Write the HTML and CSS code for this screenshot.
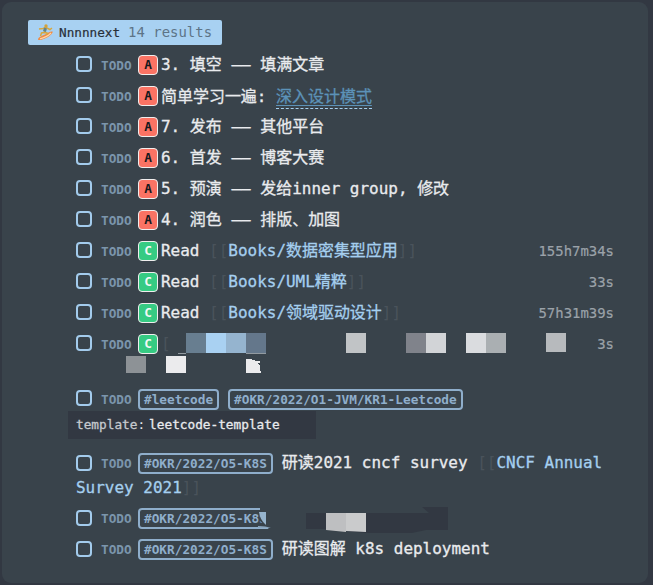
FILE: index.html
```
<!DOCTYPE html>
<html lang="zh-CN">
<head>
<meta charset="utf-8">
<title>Nnnnnext</title>
<link rel="stylesheet" href="styles.css">
</head>
<body>
<main class="panel">
  <header class="query">
    <svg class="surfer" width="17" height="17" viewBox="0 0 17 17"><path d="M1 15.500C1 13 5 12 8 10.500S13 7 15.500 7.500C16.500 8 14 11.500 10 13.500S1.500 17 1 15.500Z" fill="#ef8b45"/><path d="M3 14.800C7 14 11 12 14 9" fill="none" stroke="#ffd5a5" stroke-width="1.200"/><path d="M2 5L6 4.500L9 3.500L13 5.500L15 4M8.500 5L7 8.500L4.500 9L3.500 12M7 8.500L10 9L10.500 11" fill="none" stroke="#d9a83d" stroke-width="1.500"/><path d="M8.500 4L7.500 7.500" stroke="#65858a" stroke-width="3"/><circle cx="9" cy="2" r="1.700" fill="#d2a23c"/></svg>
    <span class="name">Nnnnnext</span><span class="count">14 results</span>
  </header>
  <ul class="tasks">
    <li><div class="line"><i class="check"></i><b class="todo">TODO</b><b class="prio a">A</b><span class="text">3. 填空 —— 填满文章</span></div></li>
    <li><div class="line"><i class="check"></i><b class="todo">TODO</b><b class="prio a">A</b><span class="text linked">简单学习一遍: <a class="ext">深入设计模式</a></span></div></li>
    <li><div class="line"><i class="check"></i><b class="todo">TODO</b><b class="prio a">A</b><span class="text">7. 发布 —— 其他平台</span></div></li>
    <li><div class="line"><i class="check"></i><b class="todo">TODO</b><b class="prio a">A</b><span class="text">6. 首发 —— 博客大赛</span></div></li>
    <li><div class="line"><i class="check"></i><b class="todo">TODO</b><b class="prio a">A</b><span class="text">5. 预演 —— 发给inner group, 修改</span></div></li>
    <li><div class="line"><i class="check"></i><b class="todo">TODO</b><b class="prio a">A</b><span class="text">4. 润色 —— 排版、加图</span></div></li>
    <li><div class="line"><i class="check"></i><b class="todo">TODO</b><b class="prio c">C</b><span class="text">Read <s>[[</s><a>Books/数据密集型应用</a><s>]]</s></span><span class="time">155h7m34s</span></div></li>
    <li><div class="line"><i class="check"></i><b class="todo">TODO</b><b class="prio c">C</b><span class="text">Read <s>[[</s><a>Books/UML精粹</a><s>]]</s></span><span class="time">33s</span></div></li>
    <li><div class="line"><i class="check"></i><b class="todo">TODO</b><b class="prio c">C</b><span class="text">Read <s>[[</s><a>Books/领域驱动设计</a><s>]]</s></span><span class="time">57h31m39s</span></div></li>
    <li class="redacted"><div class="line"><i class="check"></i><b class="todo">TODO</b><b class="prio c">C</b><span class="text"><s>[</s></span><span class="time">3s</span></div>
      <svg class="mosaic" width="440" height="41" viewBox="0 0 440 41" shape-rendering="crispEdges"><path d="M60 0h20v20H60z" fill="#687e90"/><path d="M80 0h20v20H80z" fill="#a9d1f2"/><path d="M100 0h20v20h-20z" fill="#95b4cf"/><path d="M120 0h20v20h-20z" fill="#64778b"/><path d="M52 20h8v1h-8zM120 20h20v1h-20z" fill="#929aa0"/><path d="M220 0h20v20h-20z" fill="#c1c4c6"/><path d="M280 0h20v20h-20z" fill="#80838b"/><path d="M300 0h20v20h-20z" fill="#d2d4d7"/><path d="M340 0h20v20h-20z" fill="#dadcdf"/><path d="M360 0h20v20h-20z" fill="#aaafb2"/><path d="M420 0h20v19h-20z" fill="#b7babd"/><path d="M0 23h20v17H0z" fill="#8d9296"/><path d="M40 23h20v17H40z" fill="#ebebed"/><path d="M120 26q7 0 10 2h4v2h-3l3 3v2l1 5h-15z" fill="#ebebed"/></svg>
    </li>
    <li><div class="line"><i class="check"></i><b class="todo">TODO</b><b class="tag">#leetcode</b><b class="tag">#OKR/2022/O1-JVM/KR1-Leetcode</b></div>
      <div class="props"><span class="key">template</span>:<span class="value">leetcode-template</span></div>
    </li>
    <li><div class="line"><i class="check"></i><b class="todo">TODO</b><b class="tag">#OKR/2022/O5-K8S</b><span class="text">研读2021 cncf survey <s>[[</s><a>CNCF Annual</a></span></div>
      <div class="wrap"><a>Survey 2021</a><s>]]</s></div>
    </li>
    <li class="redacted"><div class="line"><i class="check"></i><b class="todo">TODO</b><b class="tag">#OKR/2022/O5-K8S</b></div>
      <svg class="smudge" width="192" height="28" viewBox="0 0 192 28"><path d="M4 0H20V24H14L4 15Z" fill="#39434b"/><path d="M3 6H10V19Q4 14 3 6Z" fill="#96b4cd"/><path d="M2 20Q10 20 15 22H2Z" fill="#8aa6bf"/><path d="M50 7H173L166 1H192V24H170L156 27H110L68 23H50Z" fill="#323842"/><path d="M70 7H90V26L70 24Z" fill="#bebfc1"/><path d="M90 7H110V26L90 25Z" fill="#cacbcc"/></svg>
    </li>
    <li><div class="line"><i class="check"></i><b class="todo">TODO</b><b class="tag">#OKR/2022/O5-K8S</b><span class="text">研读图解 k8s deployment</span></div></li>
  </ul>
</main>
</body>
</html>
```
FILE: styles.css
```
* { box-sizing: border-box; }
body {
  margin: 0;
  height: 585px;
  padding: 2px 5px 2px 2px;
  overflow: hidden;
  background: #323842;
  color: #e9ebee;
  font-family: "DejaVu Sans Mono", "Noto Sans CJK SC", monospace;
  font-size: 15.980px;
}
.panel {
  height: 581px;
  padding: 18px 34px 0 26px;
  border-radius: 9px;
  background: #39434b;
}
.query {
  display: flex;
  align-items: center;
  width: 194px;
  height: 25px;
  padding-left: 9px;
  border-radius: 2px;
  background: #a8d1f2;
  color: #283039;
  font-size: 12.700px;
}
.surfer { flex: none; margin-right: 5px; }
.name { -webkit-text-stroke: 0.2px; }
.count { margin: -1px 0 0 8px; color: #5d7487; font-size: 13.950px; }
.tasks {
  margin: 4px 0 0;
  padding: 0 0 0 48px;
  list-style: none;
}
.line {
  display: flex;
  align-items: center;
  height: 31px;
  white-space: pre;
}
.check {
  flex: none;
  width: 16px;
  height: 16px;
  margin: 0 9px 1px 0;
  border: 2px solid #a3cbec;
  border-radius: 4px;
}
.tasks > li:nth-last-child(-n+3) .check { margin: 1px 9px 0 0; }
.todo {
  width: 31px;
  margin: 1px 6px 0 0;
  color: #7b95ac;
  font-size: 12.750px;
}
.prio {
  flex: none;
  width: 20px;
  height: 20px;
  margin: 1px 3px 0 0;
  border: 1px solid #f0eeee;
  border-radius: 4px;
  font-size: 12.800px;
  line-height: 18px;
  text-align: center;
}
.a { background: #fa7364; color: #15191d; }
.c { background: #36cb83; color: #f4f8f6; }
.text, .wrap, .value, .key { -webkit-text-stroke: 0.3px; }
.text { line-height: 24px; }
.linked { margin-top: 2px; }
a { color: #a5cfef; }
s { color: #4a535b; text-decoration: none; -webkit-text-stroke: 0; }
.ext {
  display: inline-block;
  height: 24px;
  border-bottom: 1px dashed #a5cfef;
  color: #5c92b8;
  text-decoration: underline;
  text-underline-offset: 3px;
  text-decoration-thickness: 1px;
}
.time { margin-left: auto; color: #9ba2a9; font-size: 13.950px; -webkit-text-stroke: 0.2px; }
.tag {
  height: 21px;
  margin: 1px 9px 0 0;
  padding: 0 4px;
  border: 2px solid #8faecb;
  border-radius: 4px;
  color: #8faecb;
  font-size: 12.750px;
  line-height: 17px;
}
.redacted { position: relative; }
.mosaic { position: absolute; left: 50px; top: 5px; }
.redacted:has(.mosaic) { height: 55px; }
.smudge { position: absolute; left: 180px; top: 4px; }
.props {
  width: 248px;
  height: 28px;
  margin: -3px 0 8px -8px;
  padding-left: 8px;
  background: #323842;
  font-size: 12.750px;
  line-height: 27px;
}
.key { color: #c6cacf; }
.value { margin-left: 4px; }
.wrap { height: 24px; line-height: 20px; }
```
